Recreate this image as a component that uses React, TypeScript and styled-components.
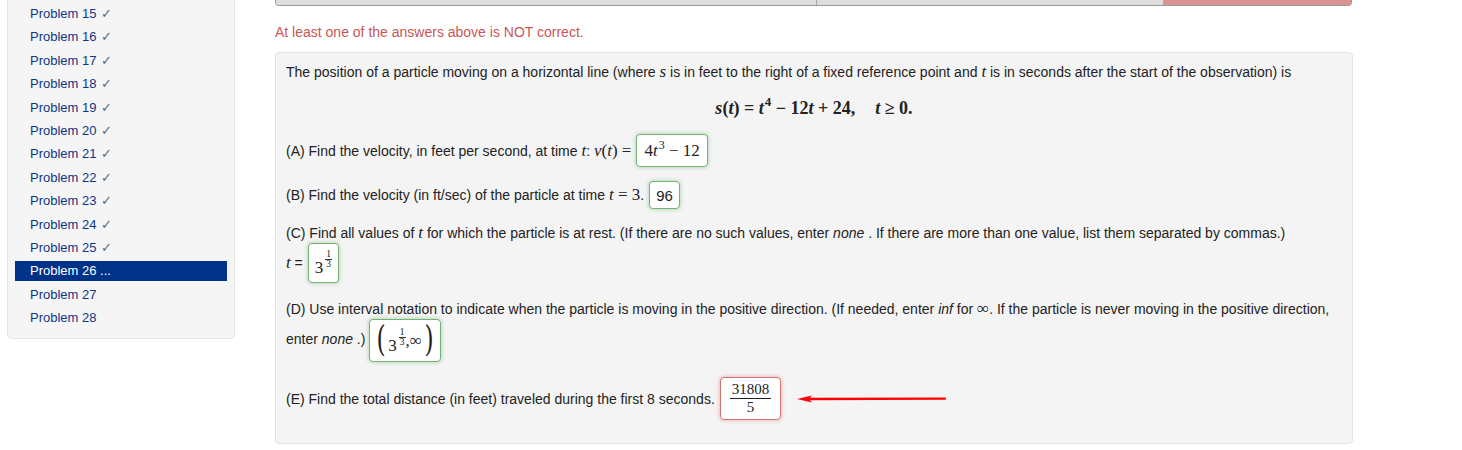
import React from 'react';
import styled, { createGlobalStyle } from 'styled-components';

const problems = [15, 16, 17, 18, 19, 20, 21, 22, 23, 24, 25, 26, 27, 28];
const CURRENT = 26;

export default function App() {
  return (
    <>
      <GlobalStyle />
      <Page>
        <Sidebar>
          <NavList>
            {problems.map((n) => (
              <NavItem key={n} $active={n === CURRENT}>
                Problem {n}
                {n < CURRENT && <Check>{'\u2713'}</Check>}
                {n === CURRENT && ' ...'}
              </NavItem>
            ))}
          </NavList>
        </Sidebar>

        <Main>
          <ResultsBar>
            <ResultCell />
            <ResultCell $divider />
            <ResultCell $divider $bad />
          </ResultsBar>

          <Message>At least one of the answers above is NOT correct.</Message>

          <ProblemBox>
            <Para>
              The position of a particle moving on a horizontal line (where <Var>s</Var> is in feet to the right of a
              fixed reference point and <Var>t</Var> is in seconds after the start of the observation) is
            </Para>

            <Equation>
              <Var>s</Var>
              <M>(</M>
              <Var>t</Var>
              <M>) = </M>
              <Var>t</Var>
              <Sup>4</Sup>
              <M> − 12</M>
              <Var>t</Var>
              <M> + 24,</M>
              <Quad />
              <Var>t</Var>
              <M> ≥ 0.</M>
            </Equation>

            <Row $mt={15}>
              <span>
                (A) Find the velocity, in feet per second, at time <Var>t</Var>: <Var>v</Var>
                <M>(</M>
                <Var>t</Var>
                <M>) =</M>
              </span>
              <AnswerBox $status="ok" $h={33} $px={7}>
                <span>
                  <M>4</M>
                  <Var>t</Var>
                  <Sup>3</Sup>
                  <M> − 12</M>
                </span>
              </AnswerBox>
            </Row>

            <Row $mt={14}>
              <span>
                (B) Find the velocity (in ft/sec) of the particle at time <Var>t</Var>
                <M> = 3</M>.
              </span>
              <AnswerBox $status="ok" $h={28} $px={6}>
                <Plain>96</Plain>
              </AnswerBox>
            </Row>

            <Block $mt={14}>
              <Para>
                (C) Find all values of <Var>t</Var> for which the particle is at rest. (If there are no such values,
                enter <em>none</em> . If there are more than one value, list them separated by commas.)
              </Para>
              <Row>
                <span>
                  <Var>t</Var> =
                </span>
                <AnswerBox $status="ok" $h={40} $px={6}>
                  <CubeRoot />
                </AnswerBox>
              </Row>
            </Block>

            <Para $mt={16}>
              <span>
                (D) Use interval notation to indicate when the particle is moving in the positive direction. (If
                needed, enter <em>inf</em> for <M>∞</M>. If the particle is never moving in the positive direction,
              </span>
              <br />
              <span>
                enter <em>none</em> .)
              </span>{' '}
              <AnswerBox $status="ok" $h={43} $px={4} $inline>
                <BigParen>(</BigParen>
                <CubeRoot />
                <M>,∞</M>
                <BigParen>)</BigParen>
              </AnswerBox>
            </Para>

            <Row $mt={15}>
              <span>(E) Find the total distance (in feet) traveled during the first 8 seconds.</span>
              <AnswerBox $status="bad" $h={43} $px={9}>
                <Fraction>
                  <Num>31808</Num>
                  <Den>5</Den>
                </Fraction>
              </AnswerBox>
              <ArrowMark width="150" height="10" viewBox="0 0 150 10">
                <path d="M10 5 L148 4.6" stroke="#f00" strokeWidth="2.4" strokeLinecap="round" />
                <polygon points="0,5 15,1.5 12,5 15,8.5" fill="#f00" />
              </ArrowMark>
            </Row>
          </ProblemBox>
        </Main>
      </Page>
    </>
  );
}

function CubeRoot() {
  return (
    <PowerWrap>
      <Base>3</Base>
      <TinyFrac>
        <TinyNum>1</TinyNum>
        <TinyDen>3</TinyDen>
      </TinyFrac>
    </PowerWrap>
  );
}

const GlobalStyle = createGlobalStyle`
  body {
    margin: 0;
    background: #ffffff;
    font-family: "Liberation Sans", Arial, sans-serif;
    font-size: 14px;
    color: #222222;
  }
`;

const Page = styled.div`
  display: flex;
  align-items: flex-start;
  gap: 40px;
  padding-left: 7px;
`;

const Sidebar = styled.nav`
  width: 228px;
  box-sizing: border-box;
  background: #f5f5f5;
  border: 1px solid #e3e3e3;
  border-top: none;
  border-radius: 0 0 5px 5px;
  padding: 4px 7px 10px 7px;
`;

const NavList = styled.div`
  display: flex;
  flex-direction: column;
  gap: 3.4px;
`;

const NavItem = styled.div<{ $active?: boolean }>`
  height: 20px;
  line-height: 20px;
  padding-left: 15px;
  font-size: 13px;
  overflow: hidden;
  color: ${(p) => (p.$active ? '#ffffff' : '#0d3585')};
  background: ${(p) => (p.$active ? '#003388' : 'transparent')};
`;

const Check = styled.span`
  margin-left: 4px;
  font-family: "DejaVu Sans", sans-serif;
  font-size: 13px;
  font-weight: 200;
  line-height: 0;
  color: #5c6784;
`;

const Main = styled.main`
  width: 1078px;
  display: flex;
  flex-direction: column;
`;

const ResultsBar = styled.div`
  display: grid;
  grid-template-columns: 540px 347px 1fr;
  height: 6px;
  box-sizing: border-box;
  border: 1px solid #9a9a9a;
  border-top: none;
  border-radius: 0 0 4px 4px;
  overflow: hidden;
  margin-right: 1px;
`;

const ResultCell = styled.div<{ $divider?: boolean; $bad?: boolean }>`
  background: ${(p) => (p.$bad ? '#d99393' : '#dddddd')};
  border-left: ${(p) => (p.$divider ? '1px solid #a8a8a8' : 'none')};
`;

const Message = styled.div`
  margin: 16px 0 10px;
  line-height: 20px;
  color: #c95756;
`;

const ProblemBox = styled.section`
  background: #f4f4f4;
  border: 1px solid #e3e3e3;
  border-radius: 4px;
  padding: 9px 10px 23px 10px;
`;

const Para = styled.div<{ $mt?: number }>`
  line-height: 20px;
  margin-top: ${(p) => p.$mt ?? 0}px;
`;

const Block = styled.div<{ $mt?: number }>`
  margin-top: ${(p) => p.$mt ?? 0}px;
`;

const Row = styled.div<{ $mt?: number }>`
  display: flex;
  align-items: center;
  gap: 5px;
  line-height: 20px;
  margin-top: ${(p) => p.$mt ?? 0}px;
`;

const Equation = styled.div`
  margin-top: 16px;
  line-height: 20px;
  text-align: center;
  white-space: pre;
  font-weight: 600;

  & > span,
  & > i {
    font-size: 18px;
  }
  & > sup {
    font-size: 13px;
    vertical-align: 8px;
  }
`;

const M = styled.span`
  font-family: "Liberation Serif", "DejaVu Serif", serif;
  font-size: 17px;
  white-space: pre;
`;

const Var = styled.i`
  font-family: "Liberation Serif", "DejaVu Serif", serif;
  font-size: 17px;
  font-style: italic;
`;

const Sup = styled.sup`
  font-family: "Liberation Serif", "DejaVu Serif", serif;
  font-size: 12px;
  vertical-align: 7px;
  line-height: 0;
  margin-left: 1px;
`;

const Quad = styled.span`
  display: inline-block;
  width: 20px;
`;

const Plain = styled.span`
  font-size: 15px;
  color: #222222;
`;

const AnswerBox = styled.span<{ $status: 'ok' | 'bad'; $h: number; $px: number; $inline?: boolean }>`
  display: ${(p) => (p.$inline ? 'inline-flex' : 'flex')};
  align-items: center;
  vertical-align: middle;
  box-sizing: border-box;
  height: ${(p) => p.$h}px;
  padding: 0 ${(p) => p.$px}px;
  background: #ffffff;
  border-radius: 4px;
  border: 1px solid ${(p) => (p.$status === 'ok' ? '#73b373' : '#d27474')};
  box-shadow: 0 0 4px
    ${(p) => (p.$status === 'ok' ? 'rgba(70, 150, 70, 0.45)' : 'rgba(210, 70, 70, 0.45)')};
  line-height: 1;
`;

const PowerWrap = styled.span`
  display: inline-flex;
  align-items: flex-start;
`;

const Base = styled.span`
  font-family: "Liberation Serif", "DejaVu Serif", serif;
  font-size: 17px;
  line-height: 17px;
  margin-top: 9px;
`;

const TinyFrac = styled.span`
  display: inline-flex;
  flex-direction: column;
  align-items: center;
  margin-left: 2px;
  font-family: "Liberation Serif", "DejaVu Serif", serif;
  font-size: 9.5px;
  line-height: 9px;
`;

const TinyNum = styled.span`
  border-bottom: 1px solid #333333;
  padding: 0 1px;
`;

const TinyDen = styled.span``;

const BigParen = styled.span`
  font-family: "DejaVu Serif", serif;
  font-size: 36px;
  font-weight: 300;
  line-height: 1;
  display: inline-block;
  transform: scaleX(0.65);
  margin: -3px 0 0;
  color: #222222;
`;

const Fraction = styled.span`
  display: inline-flex;
  flex-direction: column;
  align-items: center;
  font-family: "Liberation Serif", "DejaVu Serif", serif;
  font-size: 15px;
  line-height: 15px;
`;

const Num = styled.span`
  padding: 0 2px 1px;
  border-bottom: 1px solid #222222;
`;

const Den = styled.span`
  padding-top: 1px;
`;

const ArrowMark = styled.svg`
  margin-left: 11px;
  flex-shrink: 0;
`;
